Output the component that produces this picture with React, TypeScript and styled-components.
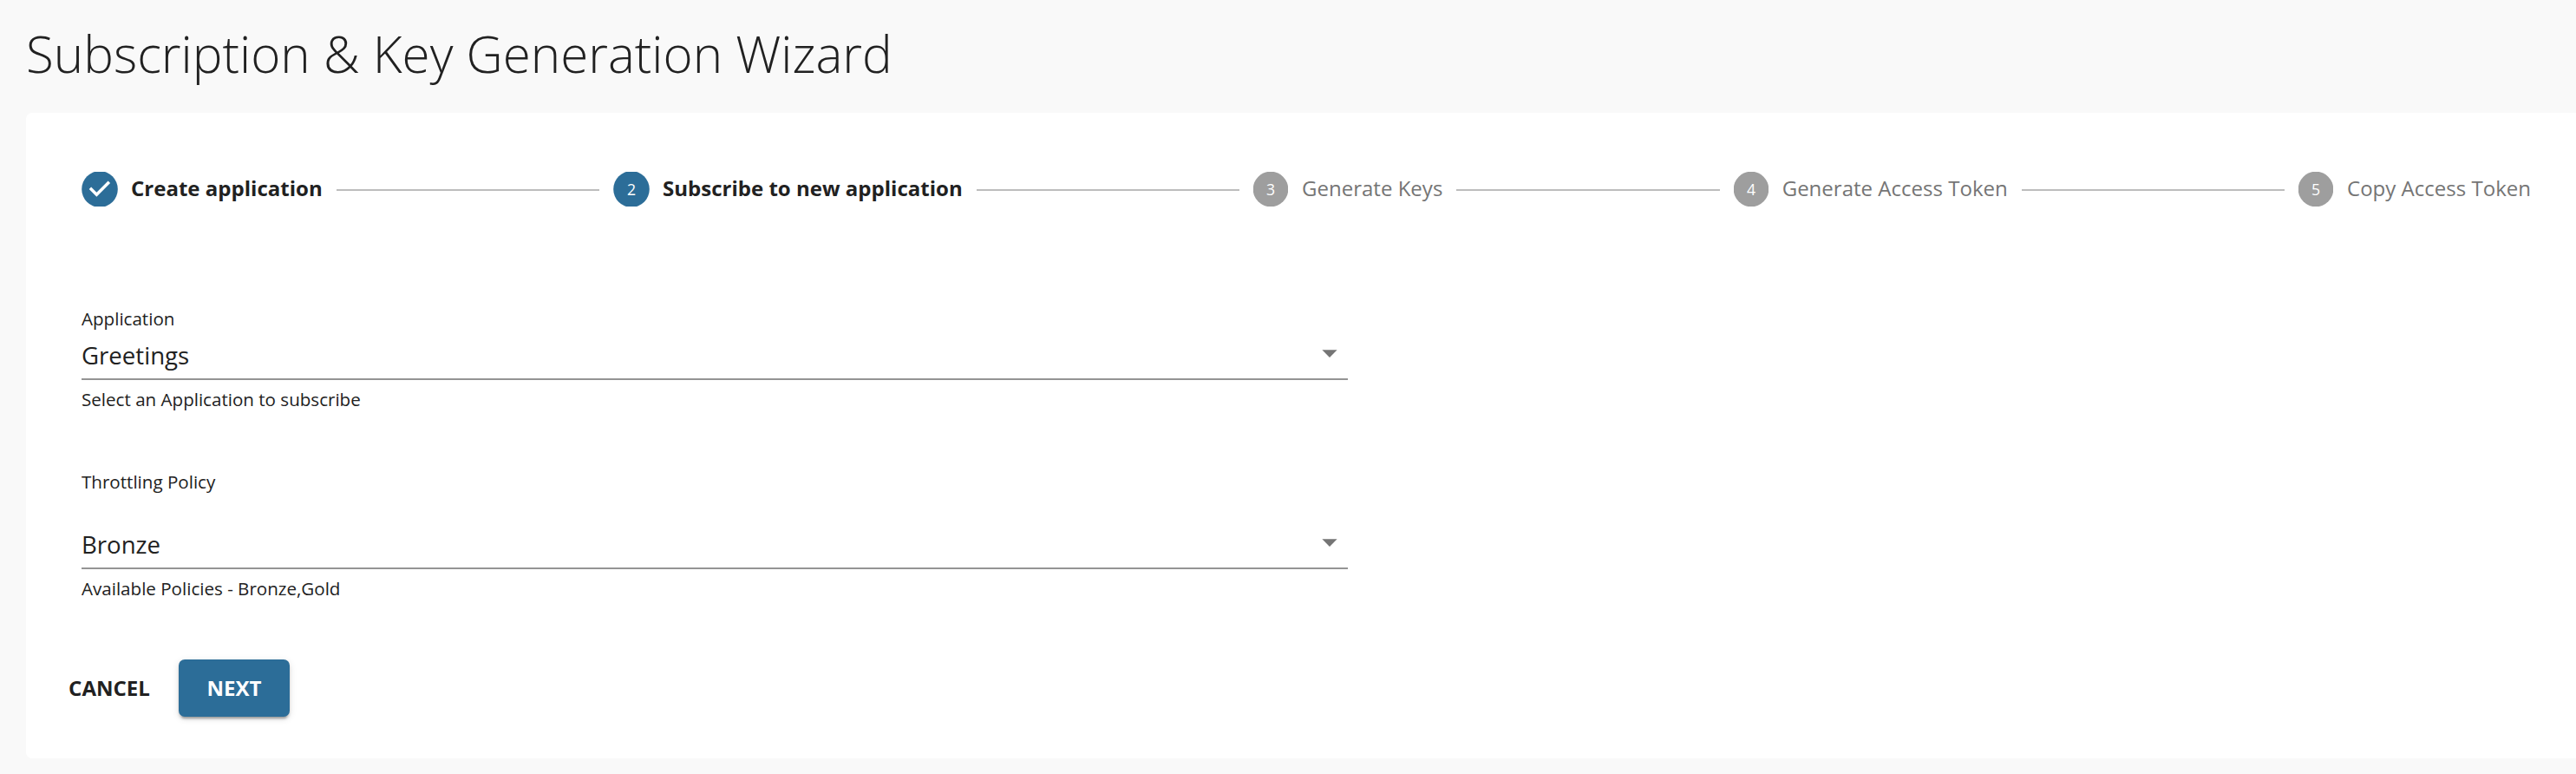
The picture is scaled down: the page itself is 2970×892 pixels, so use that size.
import React from 'react';
import styled, { createGlobalStyle } from 'styled-components';

const GlobalStyle = createGlobalStyle`
  * { box-sizing: border-box; }
  body {
    margin: 0;
    background: #f9f9f9;
    color: #212121;
    font-family: "Open Sans", sans-serif;
    overflow: hidden;
  }
`;

const Page = styled.main`
  height: 892px;
  padding-left: 30px;
  background: #f9f9f9;
`;

const Title = styled.h1`
  margin: 0 0 7px;
  font-size: 58.33px;
  font-weight: 300;
  line-height: 123px;
  white-space: nowrap;
`;

const Card = styled.section`
  height: 744px;
  padding: 68px 52px 48px 64px;
  background: #fff;
  border-radius: 7px 0 0 7px;
`;

const Stepper = styled.ol`
  display: flex;
  align-items: center;
  height: 40px;
  margin: 0 0 115px;
  padding: 0;
  list-style: none;
`;

const Step = styled.li<{ $reached: boolean }>`
  display: flex;
  align-items: center;
  flex: none;
  gap: ${({ $reached }) => ($reached ? 15 : 16)}px;
`;

const StepBadge = styled.svg<{ $reached: boolean }>`
  display: block;
  flex: none;
  width: ${({ $reached }) => ($reached ? 42 : 40)}px;
  height: 40px;
  fill: ${({ $reached }) => ($reached ? '#2c6d98' : '#9e9e9e')};
`;

const StepNumber = styled.text`
  fill: #fff;
  font-size: 17.7px;
  text-anchor: middle;
`;

const StepLabel = styled.span<{ $reached: boolean }>`
  margin-top: -2px;
  color: ${({ $reached }) => ($reached ? '#212121' : '#757575')};
  font-size: 24.04px;
  font-weight: ${({ $reached }) => ($reached ? 700 : 400)};
  line-height: 36px;
  white-space: nowrap;
`;

const Connector = styled.li`
  flex: 1;
  height: 2px;
  margin: 2px 16px 0;
  background: #bdbdbd;
`;

const Form = styled.div`
  display: flex;
  flex-direction: column;
  gap: 67px;
  width: 1460px;
`;

const Field = styled.div`
  display: flex;
  flex-direction: column;
`;

const Caption = styled.span`
  font-size: 20.58px;
  line-height: 28px;
`;

const Select = styled.div<{ $offset: number }>`
  display: flex;
  align-items: center;
  justify-content: space-between;
  height: 57px;
  margin: ${({ $offset }) => $offset}px 0 8px;
  padding: 1px 12px 0 0;
  border-bottom: 2px solid #949494;
  font-size: 27.6px;
  line-height: 38px;
`;

const Arrow = styled.svg`
  display: block;
  width: 18px;
  height: 9px;
  margin-bottom: 3px;
  fill: #757575;
`;

const Actions = styled.div`
  display: flex;
  align-items: center;
  gap: 33px;
  margin: 68px 0 0 -15px;
`;

const Button = styled.button<{ $primary?: boolean }>`
  width: ${({ $primary }) => ($primary ? 128 : 94)}px;
  height: 66px;
  padding: 0;
  border: 0;
  border-radius: 7px;
  background: ${({ $primary }) => ($primary ? '#2c6d98' : 'transparent')};
  box-shadow: ${({ $primary }) =>
    $primary
      ? '0 5px 2px -3px rgba(0,0,0,.2), 0 3px 3px 0 rgba(0,0,0,.14), 0 2px 9px 0 rgba(0,0,0,.12)'
      : 'none'};
  color: ${({ $primary }) => ($primary ? '#fff' : '#212121')};
  font: 700 24.04px/36px "Open Sans", sans-serif;
  text-transform: uppercase;
`;

const steps = [
  'Create application',
  'Subscribe to new application',
  'Generate Keys',
  'Generate Access Token',
  'Copy Access Token',
];
const activeStep = 1;

const fields = [
  { label: 'Application', value: 'Greetings', help: 'Select an Application to subscribe', offset: 0 },
  { label: 'Throttling Policy', value: 'Bronze', help: 'Available Policies - Bronze,Gold', offset: 30 },
];

function Badge({ index }: { index: number }) {
  const reached = index <= activeStep;
  return (
    <StepBadge $reached={reached} viewBox={reached ? '-21 -20 42 40' : '-20 -20 40 40'}>
      <circle r={reached ? 20.8 : 20.3} />
      {index < activeStep ? (
        <path
          transform="translate(-21 -20.9) scale(1.74)"
          fill="#fff"
          d="M10 17l-5-5 1.4-1.4 3.6 3.6 7.6-7.6L19 8l-9 9z"
        />
      ) : (
        <StepNumber x="0" y="7">{index + 1}</StepNumber>
      )}
    </StepBadge>
  );
}

export default function App() {
  return (
    <>
      <GlobalStyle />
      <Page>
        <Title>Subscription &amp; Key Generation Wizard</Title>
        <Card>
          <Stepper>
            {steps.map((label, index) => (
              <React.Fragment key={label}>
                {index > 0 && <Connector aria-hidden="true" />}
                <Step $reached={index <= activeStep}>
                  <Badge index={index} />
                  <StepLabel $reached={index <= activeStep}>{label}</StepLabel>
                </Step>
              </React.Fragment>
            ))}
          </Stepper>
          <Form>
            {fields.map(({ label, value, help, offset }) => (
              <Field key={label}>
                <Caption>{label}</Caption>
                <Select $offset={offset}>
                  {value}
                  <Arrow viewBox="0 0 18 9">
                    <path d="M.4.3h17.2L9 8.9z" />
                  </Arrow>
                </Select>
                <Caption>{help}</Caption>
              </Field>
            ))}
          </Form>
          <Actions>
            <Button>Cancel</Button>
            <Button $primary>Next</Button>
          </Actions>
        </Card>
      </Page>
    </>
  );
}
